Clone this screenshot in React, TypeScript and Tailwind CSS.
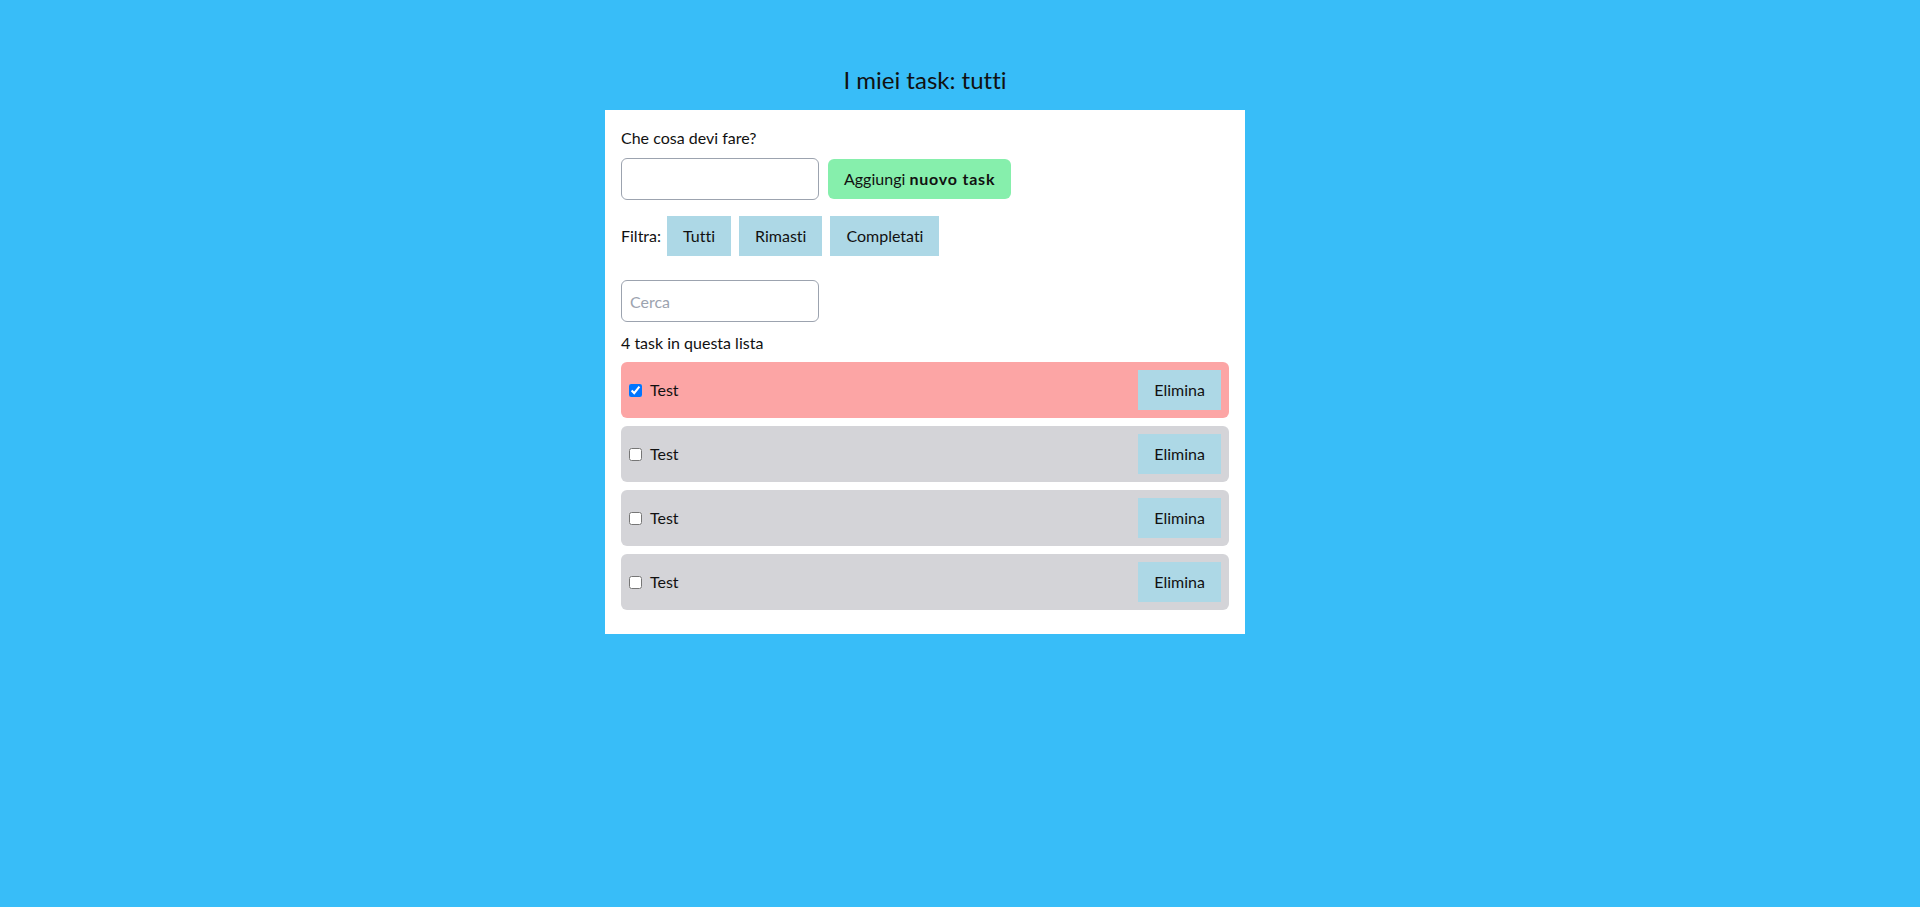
import React, { useState } from "react";

const font = { fontFamily: "Lato, 'Noto Sans', sans-serif" };

export default function App() {
  const [tasks, setTasks] = useState([
    { id: 1, name: "Test", done: true },
    { id: 2, name: "Test", done: false },
    { id: 3, name: "Test", done: false },
    { id: 4, name: "Test", done: false },
  ]);
  return (
    <div
      className="min-h-[907px] w-full bg-[#38bdf8] text-[#111] font-['Lato',_sans-serif] [font-variant-ligatures:none]"
      style={font}
    >
      <div className="ml-[605px] w-[640px] pt-[64px]">
        <h1 className="text-center text-[24px] leading-[32px] mb-[14px]">I miei task: tutti</h1>
        <div className="bg-white px-4 pt-4 pb-6">
          <div className="text-[16px] leading-[24px] mb-2">Che cosa devi fare?</div>
          <div className="flex items-center gap-[9px]">
            <input className="w-[198px] h-[42px] rounded-md border border-[#9ca3af] px-2 outline-none" />
            <button className="h-[40px] rounded-md bg-[#86efac] px-4 text-[16px]">
              Aggiungi <b className="tracking-[0.8px]">nuovo task</b>
            </button>
          </div>
          <div className="mt-4 flex items-center gap-2 text-[16px]">
            <span className="mr-[-2px]">Filtra:</span>
            <button className="h-[40px] bg-[#add8e6] px-4">Tutti</button>
            <button className="h-[40px] bg-[#add8e6] px-4">Rimasti</button>
            <button className="h-[40px] bg-[#add8e6] px-4">Completati</button>
          </div>
          <input
            placeholder="Cerca"
            className="mt-6 block w-[198px] h-[42px] rounded-md border border-[#9ca3af] px-2 text-[16px] placeholder:text-[#9ca3af] outline-none"
          />
          <div className="mt-[9px] text-[16px] leading-[24px]">4 task in questa lista</div>
          <ul className="mt-[7px] flex flex-col gap-2">
            {tasks.map((t) => (
              <li
                key={t.id}
                className={`flex items-center justify-between rounded-md p-2 ${t.done ? "bg-[#fca5a5]" : "bg-[#d4d4d8]"}`}
              >
                <label className="flex items-center gap-2 text-[16px]">
                  <input
                    type="checkbox"
                    checked={t.done}
                    onChange={() =>
                      setTasks(tasks.map((x) => (x.id === t.id ? { ...x, done: !x.done } : x)))
                    }
                    className="w-[13px] h-[13px]"
                  />
                  {t.name}
                </label>
                <button className="h-[40px] bg-[#add8e6] px-4 text-[16px]">Elimina</button>
              </li>
            ))}
          </ul>
        </div>
      </div>
    </div>
  );
}
